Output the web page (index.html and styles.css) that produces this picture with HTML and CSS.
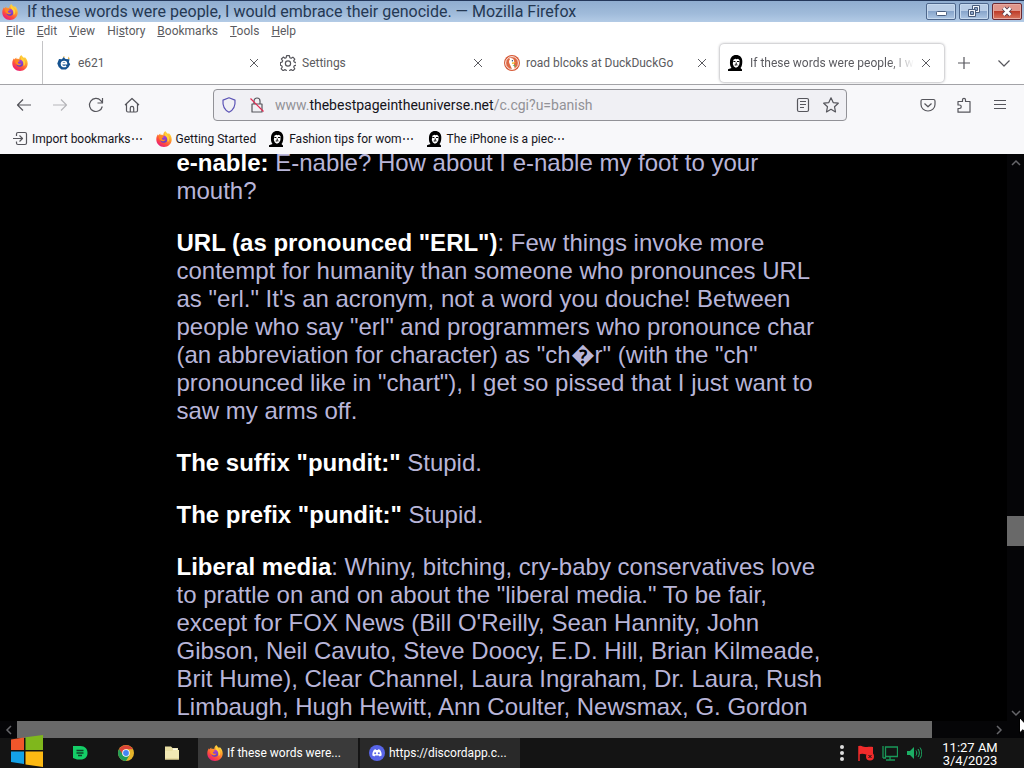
FILE: index.html
```html
<!DOCTYPE html>
<html lang="en">
  <head>
    <meta charset="UTF-8" />
    <meta name="viewport" content="width=device-width, initial-scale=1.0" />
    <title>If these words were people, I would embrace their genocide.</title>
    <link rel="stylesheet" href="styles.css">
  </head>
  <body>
    <!-- shared icons -->
    <svg class="sprite" aria-hidden="true">
      <defs>
        <linearGradient id="fox-fire" x1="0.85" y1="0" x2="0.2" y2="1">
          <stop offset="0" stop-color="#fff04a" />
          <stop offset="0.35" stop-color="#ffa32b" />
          <stop offset="0.7" stop-color="#ff4b3e" />
          <stop offset="1" stop-color="#e31587" />
        </linearGradient>
        <linearGradient id="fox-globe" x1="0" y1="0" x2="0" y2="1">
          <stop offset="0" stop-color="#b340d8" />
          <stop offset="1" stop-color="#5b3fc4" />
        </linearGradient>
      </defs>
      <symbol id="firefox" viewBox="0 0 16 16">
        <path fill="url(#fox-fire)" d="M9.5 0c.4 1.3 1.5 2 2.6 3 .4-.2.6-.5.6-.9 1.800 1.500 3 3.800 3 6.300 0 4.200-3.400 7.500-7.700 7.500S.3 12.600.3 8.400c0-2.200.7-3.800 1.700-5.100l.4 1.300c.5-.9 1.100-1.600 1.900-2.100l.2 1.500c1-.3 1.900-.2 2.700.2C7.300 2.500 8 1 9.500 0z" />
        <circle cx="7.800" cy="8.200" r="3.500" fill="url(#fox-globe)" />
        <path fill="#ff8a1f" d="M3.400 5.100c1.600-.7 3.200-.4 4.400.6 0 .9-1 1-1.700 1.300-.3.600-.2 1.300.4 1.600 1.100.5 2-.5 3-.1-.5 1.500-2.300 2.200-3.900 1.600-2-.8-2.900-2.900-2.200-5z" />
        <path fill="#ffd43a" d="M9.600 1.200c.2 2 3.300 3.200 3.600 6 .2 1.800-.5 3-1.500 3.900 0-2.500-.3-4.500-1.700-5.700C8.800 4.300 8.700 2.500 9.600 1.200z" />
      </symbol>
      <symbol id="face" viewBox="0 0 16 16">
        <path fill="#000" d="M8 0c4 0 6.300 2.700 6.300 6.200 0 2.700-.3 5.300-1.800 6.800L14 14.500V16H0v-1.800l3.500-1.300C2 11.300 1.800 9 2 6.300 2.200 2.500 4.500 0 8 0z" />
        <path fill="#fff" d="M5.400 4.700l2-1 1.200.5 1.400-.4 1.600 1.400-.2 4.100-1.500 2.500-2 .9-2-1.300L4.800 9z" />
        <path fill="#000" d="M5.200 6h2.200v1.100H5.600zM8.900 6h2.300v1.100H9.100zM7.700 7.600h1v1.300h-1zM6.600 9.600l1.500-.4 1.500.4-.3 1-1.200-.3-1.200.4z" />
      </symbol>
      <symbol id="close" viewBox="0 0 10 10">
        <path d="M1 1l8 8M9 1L1 9" fill="none" stroke="currentColor" />
      </symbol>
    </svg>

    <header class="titlebar">
      <svg class="icon"><use href="#firefox" /></svg>
      <h1>If these words were people, I would embrace their genocide. — Mozilla Firefox</h1>
      <div class="window-buttons">
        <button aria-label="Minimize"><svg viewBox="0 0 30 17"><rect x="10.500" y="8.500" width="10" height="4" rx="1" fill="#fff" stroke="#485c7c" /></svg></button>
        <button aria-label="Restore"><svg viewBox="0 0 30 17"><g fill="#f4f7fb" stroke="#485c7c"><path d="M13.500 2.500h7v7h-7z" /><path d="M15.500 4.500h3v3h-3z" fill="#8ba4c6" /><path d="M9.500 6.500h7v7h-7z" /><path d="M11.500 8.500h3v3h-3z" fill="#8ba4c6" /></g></svg></button>
        <button class="quit" aria-label="Close"><svg viewBox="0 0 30 17"><path d="M11.500 5l7 7M18.500 5l-7 7" fill="none" stroke="#584050" stroke-width="4.500" /><path d="M11.500 5l7 7M18.500 5l-7 7" fill="none" stroke="#fff" stroke-width="2.500" /></svg></button>
      </div>
    </header>

    <nav class="menubar">
      <a href="#"><u>F</u>ile</a>
      <a href="#"><u>E</u>dit</a>
      <a href="#"><u>V</u>iew</a>
      <a href="#">Hi<u>s</u>tory</a>
      <a href="#"><u>B</u>ookmarks</a>
      <a href="#"><u>T</u>ools</a>
      <a href="#"><u>H</u>elp</a>
    </nav>

    <div class="tabs">
      <button class="pinned" aria-label="Firefox View"><svg class="icon"><use href="#firefox" /></svg></button>
      <div class="tab">
        <svg class="icon" viewBox="0 0 16 16"><path fill="#15528f" d="M3 4l3 .2L7.500 2l2 2 4 .2-.6 3 1.300 2-1.700 3-2.500 2.300H5.500L2.700 12 1.300 8.500z" /><path fill="#e5b64a" d="M12.500 1.500l1.300 2.200-2 .5zM7 1.800l1.200-.8.8 2z" /><path d="M5.200 8.800h5.300c0-3-4.800-3.200-5.100 0-.2 3 3 3.400 4.700 2" fill="none" stroke="#fff" stroke-width="1.500" /></svg>
        <a href="#" class="tab-title">e621</a>
        <button aria-label="Close tab"><svg><use href="#close" /></svg></button>
      </div>
      <div class="tab">
        <svg class="icon line" viewBox="0 0 16 16"><path d="M6.600.7h2.800l.4 2 1.300.6 1.800-1.100 1.900 1.900-1.100 1.800.6 1.200 2 .4v2.800l-2 .4-.6 1.300 1.100 1.800-1.900 1.900-1.800-1.100-1.300.6-.4 1.900H6.600l-.4-1.900-1.300-.6-1.800 1.100-1.900-1.900L2.300 12l-.6-1.300-1.300-.4V7.500l1.700-.4.6-1.300L1.400 4l1.900-1.900 1.700 1.200 1.200-.6z" /><circle cx="8" cy="8.500" r="2.600" /></svg>
        <a href="#" class="tab-title">Settings</a>
        <button aria-label="Close tab"><svg><use href="#close" /></svg></button>
      </div>
      <div class="tab">
        <svg class="icon" viewBox="0 0 16 16"><circle cx="8" cy="8" r="8" fill="#d75a38" /><circle cx="8" cy="8" r="6.400" fill="#dd6843" stroke="#fff" stroke-width=".9" /><path fill="#fff" d="M5.200 3.200c2.500-.6 4.800.5 5 3.100l-.4 2.400.9 5-2.600.6L5.900 9.500C5 7.500 4.500 5.500 6 4.500z" /><path fill="#f5bd35" d="M8 7.500l3.800-.4-1.800 1.600-2.100.2z" /><circle cx="8.400" cy="5.700" r=".7" fill="#264d70" /><path fill="#60b055" d="M8.500 10.500l2.500-.8.300 2z" /></svg>
        <a href="#" class="tab-title">road blcoks at DuckDuckGo</a>
        <button aria-label="Close tab"><svg><use href="#close" /></svg></button>
      </div>
      <div class="tab active">
        <svg class="icon"><use href="#face" /></svg>
        <a href="#" class="tab-title">If these words were people, I would embrace their genocide.</a>
        <button aria-label="Close tab"><svg><use href="#close" /></svg></button>
      </div>
      <button class="tab-tool" aria-label="New tab"><svg class="line" viewBox="0 0 14 14"><path d="M7 1v12M1 7h12" /></svg></button>
      <button class="tab-tool" aria-label="List all tabs"><svg class="line" viewBox="0 0 14 14"><path d="M1.500 4.500L7 10l5.500-5.500" /></svg></button>
    </div>

    <div class="toolbar">
      <div class="nav-buttons">
        <button aria-label="Back"><svg class="line" viewBox="0 0 16 16"><path d="M15 8H1.500M7 2.500L1.500 8 7 13.500" /></svg></button>
        <button aria-label="Forward" disabled><svg class="line" viewBox="0 0 16 16"><path d="M1 8h13.500M9 2.500L14.500 8 9 13.500" /></svg></button>
        <button aria-label="Reload"><svg class="line" viewBox="0 0 16 16"><path d="M14.300 9.500A6.500 6.500 0 1 1 12.800 3.600L14.500 5.500M14.500 1v5h-5" /></svg></button>
        <button aria-label="Home"><svg class="line" viewBox="0 0 16 16"><path d="M1 8l7-6.500L15 8M2.500 7v6.500a1.500 1.500 0 0 0 1.500 1.500h8a1.500 1.500 0 0 0 1.500-1.500V7M6.300 15v-4a1.700 1.700 0 0 1 3.400 0v4" /></svg></button>
      </div>
      <div class="urlbar">
        <button aria-label="Tracking protection"><svg class="line shield" viewBox="0 0 16 16"><path d="M8 .8l6 2.300c.5 5.300-1.300 9.800-6 12.100C3.300 12.900 1.500 8.400 2 3.100z" /></svg></button>
        <button aria-label="Connection not secure"><svg class="line" viewBox="0 0 16 16"><path d="M3 7h10v8H3zM5 7V4a3 3 0 0 1 6 0v3" /><path d="M1.500 1.500l13 13" stroke="#e22850" /></svg></button>
        <div class="url-field">
          <input id="url" type="text">
          <label for="url">www.<b>thebestpageintheuniverse.net</b>/c.cgi?u=banish</label>
        </div>
        <button aria-label="Reader view"><svg class="line" viewBox="0 0 16 16"><rect x="2.500" y="1.500" width="11" height="13" rx="1.500" /><path d="M5 4.500h6M5 7.500h6M5 10.500h4" /></svg></button>
        <button aria-label="Bookmark this page"><svg class="line" viewBox="0 0 16 16"><path d="M8 .8l2.200 4.800 5.100.6-3.800 3.500 1 5.200L8 12.300l-4.500 2.600 1-5.200L.7 6.200l5.100-.6z" /></svg></button>
      </div>
      <div class="tools">
        <button aria-label="Save to Pocket"><svg class="line" viewBox="0 0 16 16"><path d="M2.500 2.500h11A1.500 1.500 0 0 1 15 4v3.500a7 6.500 0 0 1-14 0V4a1.500 1.500 0 0 1 1.500-1.500zM4.500 6.500L8 9.800l3.500-3.300" /></svg></button>
        <button aria-label="Extensions"><svg class="line" viewBox="0 0 16 16"><path d="M2 4.500h4.500V2.800a1.500 1.500 0 0 1 3 0v1.700H14v10.700H2v-3.700h1.500a1.500 1.500 0 0 0 0-3.500H2z" /></svg></button>
        <button aria-label="Open menu"><svg class="line" viewBox="0 0 16 16"><path d="M2 3.500h12M2 7.500h12M2 11.500h12" /></svg></button>
      </div>
    </div>

    <nav class="bookmarks">
      <a href="#"><svg class="line" viewBox="0 0 16 16"><path d="M4.500 5V3A1.500 1.500 0 0 1 6 1.500h7A1.500 1.500 0 0 1 14.500 3v9a1.500 1.500 0 0 1-1.500 1.500H6A1.500 1.500 0 0 1 4.500 12v-1.500M1 7.500h9.500M7.500 4.500l3 3-3 3" /></svg>Import bookmarks⋯</a>
      <a href="#"><svg><use href="#firefox" /></svg>Getting Started</a>
      <a href="#"><svg><use href="#face" /></svg>Fashion tips for wom⋯</a>
      <a href="#"><svg><use href="#face" /></svg>The iPhone is a piec⋯</a>
    </nav>

    <div class="viewport">
      <main>
        <article>
          <p><b>e-nable:</b> E-nable? How about I e-nable my foot to your mouth?</p>
          <p><b>URL (as pronounced "ERL")</b>: Few things invoke more contempt for humanity than someone who pronounces URL as "erl." It's an acronym, not a word you douche! Between people who say "erl" and programmers who pronounce char (an abbreviation for character) as "ch&#xFFFD;r" (with the "ch" pronounced like in "chart"), I get so pissed that I just want to saw my arms off.</p>
          <p><b>The suffix "pundit:"</b> Stupid.</p>
          <p><b>The prefix "pundit:"</b> Stupid.</p>
          <p><b>Liberal media</b>: Whiny, bitching, cry-baby conservatives love to prattle on and on about the "liberal media." To be fair, except for FOX News (Bill O'Reilly, Sean Hannity, John Gibson, Neil Cavuto, Steve Doocy, E.D. Hill, Brian Kilmeade, Brit Hume), Clear Channel, Laura Ingraham, Dr. Laura, Rush Limbaugh, Hugh Hewitt, Ann Coulter, Newsmax, G. Gordon</p>
        </article>
      </main>
      <div class="scroll-y">
        <button aria-label="Scroll up"><svg viewBox="0 0 10 10"><path d="M1 7l4-4 4 4" /></svg></button>
        <div class="track"><div class="thumb"></div></div>
        <button aria-label="Scroll down"><svg viewBox="0 0 10 10"><path d="M1 3l4 4 4-4" /></svg></button>
      </div>
      <div class="scroll-x">
        <button aria-label="Scroll left"><svg viewBox="0 0 10 10"><path d="M7 1L3 5l4 4" /></svg></button>
        <div class="track"><div class="thumb"></div></div>
        <button aria-label="Scroll right"><svg viewBox="0 0 10 10"><path d="M3 1l4 4-4 4" /></svg></button>
      </div>
      <svg class="cursor" viewBox="0 0 12 19"><path d="M.5.500v15.500l3.500-3.300 2.500 5.500 2.500-1-2.500-5.400H11z" fill="#fff" stroke="#000" /></svg>
    </div>

    <footer class="taskbar">
      <button class="start" aria-label="Start"><svg viewBox="0 0 32 32"><path fill="#f0562b" d="M0 4.500l13-2V15H0z" /><path fill="#7fb71c" d="M14.500 2.200L32 0v15H14.500z" /><path fill="#14a2e8" d="M0 16.500h13V29L0 27z" /><path fill="#fdb913" d="M14.500 16.500H32V32l-17.500-2.500z" /></svg></button>
      <div class="launchers">
        <button aria-label="Deezer"><svg viewBox="0 0 16 16"><path fill="#14ce67" d="M1 1h7.500C13 1 15.500 4 15.500 8S13 14.500 8.500 14.500H5L1 13z" /><path d="M4.500 5.500h7M4.500 8h7M6 10.500h4" stroke="#0c4428" stroke-width="1.300" /></svg></button>
        <button aria-label="Chrome"><svg viewBox="0 0 16 16"><circle cx="8" cy="8" r="8" fill="#e5b42a" /><path fill="#219d58" d="M8 8L1.100 4A8 8 0 0 0 8 16l3.500-6z" /><path fill="#db4437" d="M8 4.200h6.900A8 8 0 0 0 1.100 4L5 10z" /><circle cx="8" cy="8" r="3.800" fill="#fff" /><circle cx="8" cy="8" r="2.900" fill="#4285f4" /></svg></button>
        <button aria-label="Explorer"><svg viewBox="0 0 16 16"><path fill="#e9dfa4" d="M1 1.500h6L8.500 3H14v4H1z" /><path fill="#fdfbe8" d="M9 3.500h4.500V6H9z" /><path fill="#f1e8b4" d="M1 6h7l1-1h6v9.500H1z" /><path fill="#d8cb88" d="M1 13.500h14v1H1z" /></svg></button>
      </div>
      <button class="task current"><svg><use href="#firefox" /></svg>If these words were...</button>
      <button class="task"><svg viewBox="0 0 16 16"><circle cx="8" cy="8" r="8" fill="#5865e8" /><path fill="#fff" d="M5 4.700l1.700-.5.500.7h1.600l.5-.7 1.700.5c1.300 1.800 1.800 3.800 1.600 5.800l-2 1-.8-1.100H6.200l-.8 1.100-2-1c-.2-2 .3-4 1.600-5.800z" /><circle cx="6.200" cy="8.200" r="1" fill="#5865e8" /><circle cx="9.800" cy="8.200" r="1" fill="#5865e8" /></svg>https://discordapp.c...</button>
      <div class="tray">
        <button aria-label="More icons"><svg viewBox="0 0 16 16"><g fill="#ddd"><circle cx="8" cy="2" r="2" /><circle cx="8" cy="8" r="2" /><circle cx="8" cy="14" r="2" /></g></svg></button>
        <button aria-label="Action center"><svg viewBox="0 0 16 16"><path d="M1 1v15" stroke="#f02b2b" stroke-width="1.500" /><path fill="#f02b2b" d="M1 1c3-1 4 1.500 7 1 3 0 4-.5 7 0v7c-3-.5-5 1-7 .5S4 8 1 9.500z" /><circle cx="12" cy="11.500" r="4" fill="#f02b2b" /><path d="M10.500 10l3 3M13.500 10l-3 3" stroke="#141414" /></svg></button>
        <button aria-label="Network"><svg viewBox="0 0 16 16"><path d="M3.500 2h12v9.500H3.500zM1 1v12M8 12v3M4 15h9M1 13h3" fill="none" stroke="#199858" stroke-width="1.300" /></svg></button>
        <button aria-label="Volume"><svg viewBox="0 0 16 16"><path fill="#1cae64" d="M1 6h3l4-4v12l-4-4H1z" /><path d="M10 5.500c1 1.500 1 3.500 0 5M12 4c1.800 2.500 1.800 5.500 0 8M14 2.500c2.300 3.500 2.300 7.500 0 11" fill="none" stroke="#1cae64" /></svg></button>
      </div>
      <time class="clock" datetime="2023-03-04T11:27">11:27 AM<br>3/4/2023</time>
    </footer>
  </body>
</html>
```
FILE: styles.css
```css
* {
  box-sizing: border-box;
}
body {
  margin: 0;
  height: 100vh;
  display: flex;
  flex-direction: column;
  overflow: hidden;
  background: #000;
  font-family: Roboto, "Noto Sans", sans-serif;
  font-size: 12px;
  color: #5b5b60;
}
button {
  display: flex;
  align-items: center;
  justify-content: center;
  flex: none;
  margin: 0;
  padding: 0;
  border: 0;
  background: none;
  font: inherit;
  color: inherit;
}
a {
  color: inherit;
  text-decoration: none;
}
svg {
  display: block;
  flex: none;
}
.sprite {
  position: absolute;
  width: 0;
  height: 0;
}
.icon {
  width: 16px;
  height: 16px;
}
.line {
  fill: none;
  stroke: #56565c;
  stroke-width: 1.2;
  stroke-linejoin: round;
}

/* title bar */
.titlebar {
  display: flex;
  align-items: center;
  flex: none;
  height: 22px;
  padding: 0 2px;
  border-top: 1px solid #24375a;
  background: linear-gradient(#90add0, #a0bbda 60%, #b3cbe6);
}
.titlebar h1 {
  flex: 1;
  min-width: 0;
  margin: 0 9px;
  overflow: hidden;
  font-size: 16px;
  font-weight: 400;
  line-height: 20px;
  white-space: nowrap;
  color: #243853;
}
.window-buttons {
  display: flex;
  gap: 3px;
}
.window-buttons button {
  width: 30px;
  height: 17px;
  border: 1px solid #4e678c;
  border-radius: 2px;
  background: linear-gradient(#b8cce5 45%, #88a5cb 50%, #adc6e3);
  box-shadow: inset 0 0 0 1px #c6d9ee;
}
.window-buttons .quit {
  border-color: #6b2a32;
  background: linear-gradient(#e0968b 45%, #be3d2a 50%, #d9765f);
  box-shadow: inset 0 0 0 1px #e7aaa0;
}
.window-buttons svg {
  width: 30px;
  height: 17px;
}

/* menu */
.menubar {
  display: flex;
  align-items: center;
  gap: 12px;
  flex: none;
  height: 18px;
  padding: 0 6px;
  background: #fff;
}

/* tabs */
.tabs {
  display: flex;
  align-items: center;
  flex: none;
  height: 45px;
  padding-top: 1px;
  border-bottom: 1px solid #a3a3a7;
  background: #fff;
}
.pinned {
  width: 43px;
  height: 43px;
  margin-right: 5px;
  padding-right: 3px;
  border-right: 1px solid #c4c4c6;
}
.tab {
  display: flex;
  align-items: center;
  flex: 0 1 224px;
  min-width: 0;
  height: 38px;
  padding: 0 12px 0 8px;
  border-radius: 4px;
}
.tab.active {
  background: #fff;
  box-shadow: 0 0 3px #8a8a90;
}
.tab-title {
  flex: 1;
  min-width: 0;
  margin: 0 6px;
  overflow: hidden;
  white-space: nowrap;
}
.active .tab-title {
  mask-image: linear-gradient(to right, #000 85%, transparent);
}
.tab button svg {
  width: 10px;
  height: 10px;
}
.tab button {
  width: 12px;
  height: 16px;
}
.tab-tool {
  width: 40px;
  height: 38px;
}
.tab-tool svg {
  width: 14px;
  height: 14px;
}

/* navigation */
.toolbar {
  display: flex;
  align-items: center;
  justify-content: space-between;
  flex: none;
  height: 40px;
  padding: 0 6px;
  background: #f8f8fa;
}
.toolbar svg {
  width: 16px;
  height: 16px;
}
.nav-buttons,
.tools {
  display: flex;
  flex: none;
}
.nav-buttons button,
.tools button {
  width: 36px;
  height: 32px;
}
.nav-buttons button:disabled {
  opacity: 0.4;
}
.urlbar {
  display: flex;
  align-items: center;
  flex: 0 1 634px;
  height: 32px;
  margin: 0 16px;
  padding: 0 1px;
  border: 1px solid #929297;
  border-radius: 4px;
  background: #f0f0f4;
}
.urlbar button {
  width: 28px;
  height: 28px;
}
.urlbar .shield {
  stroke: #5a52b5;
}
.url-field {
  display: grid;
  align-items: center;
  flex: 1;
  min-width: 0;
  margin-left: 4px;
  font-size: 14px;
}
.url-field input,
.url-field label {
  grid-area: 1 / 1;
  min-width: 0;
}
.url-field input {
  width: 100%;
  padding: 0;
  border: 0;
  outline: 0;
  background: none;
  font: inherit;
}
.url-field label {
  overflow: hidden;
  white-space: nowrap;
  color: #929297;
}
.url-field b {
  font-weight: 400;
  color: #15141a;
}

/* bookmarks */
.bookmarks {
  display: flex;
  align-items: center;
  gap: 13px;
  flex: none;
  height: 29px;
  padding: 0 12px 1px;
  background: #f8f8fa;
  color: #15141a;
}
.bookmarks a {
  display: flex;
  align-items: center;
  gap: 4px;
}
.bookmarks svg {
  width: 16px;
  height: 16px;
}

/* page */
.viewport {
  position: relative;
  display: grid;
  grid-template-columns: 1fr 17px;
  grid-template-rows: 1fr 17px;
  flex: 1;
  min-height: 0;
  background: #000;
}
main {
  min-height: 0;
  overflow: hidden;
}
article {
  max-width: 654px;
  margin: -5px auto 0;
  font-family: "Liberation Sans", Arial, sans-serif;
  font-size: 24px;
  line-height: 28px;
  color: #b8b5d8;
}
article p {
  margin: 0 0 24px;
}
article b {
  color: #fff;
}
.scroll-y,
.scroll-x {
  display: flex;
  background: #050507;
}
.scroll-y {
  flex-direction: column;
}
.scroll-x {
  grid-column: 1 / 3;
}
.scroll-x > button:last-child {
  margin-right: 17px;
}
.viewport button {
  width: 17px;
  height: 17px;
}
.viewport button svg {
  width: 10px;
  height: 10px;
  fill: none;
  stroke: #66666a;
  stroke-width: 1.5;
}
.track {
  display: flex;
  flex: 1;
}
.thumb {
  background: #696969;
}
.scroll-y .track {
  flex-direction: column;
}
.scroll-y .thumb {
  height: 30px;
  margin-top: auto;
  margin-bottom: 158px;
}
.scroll-x .thumb {
  width: 94%;
}
.cursor {
  position: absolute;
  right: -7px;
  bottom: 2px;
  width: 12px;
  height: 19px;
}

/* taskbar */
.taskbar {
  display: flex;
  align-items: stretch;
  flex: none;
  height: 30px;
  background: #141414;
  color: #fff;
}
.taskbar svg {
  width: 16px;
  height: 16px;
}
.taskbar .start {
  position: relative;
  width: 54px;
}
.taskbar .start svg {
  position: absolute;
  left: 11px;
  bottom: 1px;
  width: 32px;
  height: 32px;
}
.launchers {
  display: flex;
  gap: 30px;
  padding: 0 18px;
}
.task {
  flex: 0 1 160px;
  min-width: 0;
  justify-content: flex-start;
  gap: 4px;
  margin-right: 2px;
  padding: 0 9px;
  overflow: hidden;
  background: #292929;
  white-space: nowrap;
}
.task.current {
  background: #3a3a3a;
}
.tray {
  display: flex;
  gap: 8px;
  margin-left: auto;
}
.clock {
  width: 102px;
  padding: 3px 6px 0 0;
  font-size: 13px;
  line-height: 13px;
  text-align: center;
}
```
